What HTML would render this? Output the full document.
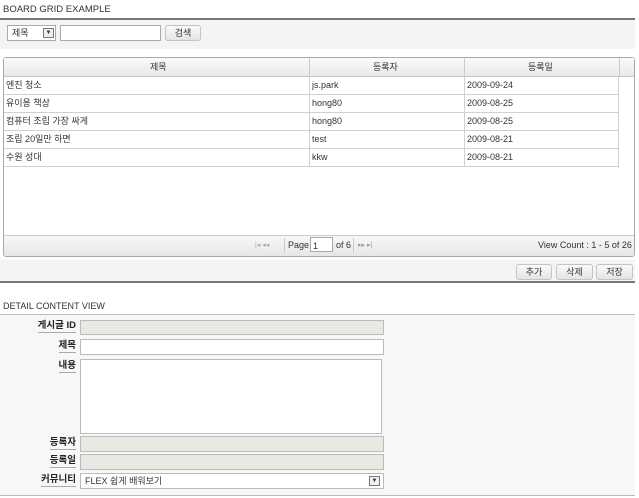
<!DOCTYPE html>
<html><head><meta charset="utf-8"><style>
*{margin:0;padding:0;box-sizing:border-box}
body{width:639px;height:498px;background:#fff;font-family:"Liberation Sans","Noto Sans CJK KR",sans-serif;font-size:9px;color:#333;position:relative;overflow:hidden}
.a{position:absolute}
.t{font-size:9px;color:#333}
.btn{position:absolute;border:1px solid #c4c4c4;border-radius:3px;background:linear-gradient(#fafafa,#e4e4e4);text-align:center;font-size:9px;line-height:14px;color:#333}
.row{position:absolute;left:4px;width:615px;height:18px;border-bottom:1px solid #d0d0d0;background:#fff}
.row span{position:absolute;top:0;font-size:9px;line-height:17px;height:17px}
.c{position:absolute;top:0;height:18px;border-left:1px solid #d0d0d0}
.lbl{position:absolute;right:563px;font-weight:bold;font-size:9.5px;border-bottom:1px solid #aaa;color:#222;line-height:12px}
.in{position:absolute;left:80px;width:304px;border:1px solid #bbb;background:#e9e8e2}
</style></head><body>
<div class="a t" style="left:3px;top:4px;font-size:9.5px">BOARD GRID EXAMPLE</div>
<div class="a" style="left:0;top:18px;width:635px;height:2px;background:#777"></div>
<div class="a" style="left:0;top:20px;width:635px;height:29px;background:#f4f4f4"></div>
<div class="a" style="left:7px;top:25px;width:49px;height:16px;background:#fff;border:1px solid #aaa"><span class="a" style="left:4px;top:0;line-height:14px">제목</span><div class="a" style="right:1px;top:2px;width:11px;height:10px;border:1px solid #777;background:#eee;font-size:6px;text-align:center;line-height:9px">▼</div></div>
<div class="a" style="left:60px;top:25px;width:101px;height:16px;background:#fff;border:1px solid #aaa"></div>
<div class="btn" style="left:165px;top:25px;width:36px;height:16px">검색</div>

<div class="a" style="left:3px;top:57px;width:632px;height:200px;border:1px solid #aaa;border-radius:3px;background:#fff"></div>
<div class="a" style="left:4px;top:58px;width:630px;height:19px;background:linear-gradient(#fbfbfb,#e8e8e8);border-bottom:1px solid #c8c8c8"></div>
<div class="a" style="left:309px;top:58px;width:1px;height:19px;background:#ccc"></div>
<div class="a" style="left:464px;top:58px;width:1px;height:19px;background:#ccc"></div>
<div class="a" style="left:619px;top:58px;width:1px;height:19px;background:#ccc"></div>
<div class="a" style="left:150px;top:58px;line-height:18px">제목</div>
<div class="a" style="left:373px;top:58px;line-height:18px">등록자</div>
<div class="a" style="left:528px;top:58px;line-height:18px">등록일</div>

<div class="row" style="top:77px"><span style="left:2px">엔진 청소</span><div class="c" style="left:305px"></div><span style="left:308px">js.park</span><div class="c" style="left:460px"></div><span style="left:463px">2009-09-24</span></div>
<div class="row" style="top:95px"><span style="left:2px">유이용 책상</span><div class="c" style="left:305px"></div><span style="left:308px">hong80</span><div class="c" style="left:460px"></div><span style="left:463px">2009-08-25</span></div>
<div class="row" style="top:113px"><span style="left:2px">컴퓨터 조립 가장 싸게</span><div class="c" style="left:305px"></div><span style="left:308px">hong80</span><div class="c" style="left:460px"></div><span style="left:463px">2009-08-25</span></div>
<div class="row" style="top:131px"><span style="left:2px">조립 20일만 하면</span><div class="c" style="left:305px"></div><span style="left:308px">test</span><div class="c" style="left:460px"></div><span style="left:463px">2009-08-21</span></div>
<div class="row" style="top:149px"><span style="left:2px">수원 성대</span><div class="c" style="left:305px"></div><span style="left:308px">kkw</span><div class="c" style="left:460px"></div><span style="left:463px">2009-08-21</span></div>
<div class="a" style="left:4px;top:77px;width:615px;height:91px;border-right:1px solid #d0d0d0"></div>

<div class="a" style="left:4px;top:235px;width:630px;height:21px;background:linear-gradient(#f8f8f8,#e6e6e6);border-top:1px solid #ccc;border-radius:0 0 3px 3px"></div>
<div class="a" style="left:255px;top:241px;color:#aaa;font-size:7px">|◂ ◂◂</div>
<div class="a" style="left:284px;top:238px;width:1px;height:15px;background:#ccc"></div>
<div class="a" style="left:288px;top:240px">Page</div>
<div class="a" style="left:310px;top:237px;width:23px;height:15px;border:1px solid #aaa;background:#fff;padding:3px 2px">1</div>
<div class="a" style="left:336px;top:240px">of 6</div>
<div class="a" style="left:353px;top:238px;width:1px;height:15px;background:#ccc"></div>
<div class="a" style="left:358px;top:241px;color:#999;font-size:7px">▸▸ ▸|</div>
<div class="a" style="left:538px;top:240px">View Count : 1 - 5 of 26</div>

<div class="a" style="left:0;top:260px;width:635px;height:23px;background:#f4f4f4;border-bottom:2px solid #777"></div>
<div class="btn" style="left:516px;top:264px;width:36px;height:16px">추가</div>
<div class="btn" style="left:556px;top:264px;width:37px;height:16px">삭제</div>
<div class="btn" style="left:596px;top:264px;width:37px;height:16px">저장</div>

<div class="a t" style="left:3px;top:301px">DETAIL CONTENT VIEW</div>
<div class="a" style="left:0;top:314px;width:635px;height:182px;background:#f7f7f7;border-top:1px solid #bbb;border-bottom:1px solid #bbb"></div>
<div class="lbl" style="top:320px">게시글 ID</div>
<div class="in" style="top:320px;height:15px"></div>
<div class="lbl" style="top:340px">제목</div>
<div class="in" style="top:339px;height:16px;background:#fff"></div>
<div class="lbl" style="top:360px">내용</div>
<div class="in" style="top:359px;height:75px;background:#fff;width:302px"></div>
<div class="lbl" style="top:437px">등록자</div>
<div class="in" style="top:436px;height:16px"></div>
<div class="lbl" style="top:455px">등록일</div>
<div class="in" style="top:454px;height:16px"></div>
<div class="lbl" style="top:474px">커뮤니티</div>
<div class="in" style="top:473px;height:16px;background:#fff"><span class="a" style="left:4px;top:0;line-height:14px">FLEX 쉽게 배워보기</span><div class="a" style="right:3px;top:2px;width:11px;height:10px;border:1px solid #777;background:#eee;font-size:6px;text-align:center;line-height:9px">▼</div></div>
</body></html>
